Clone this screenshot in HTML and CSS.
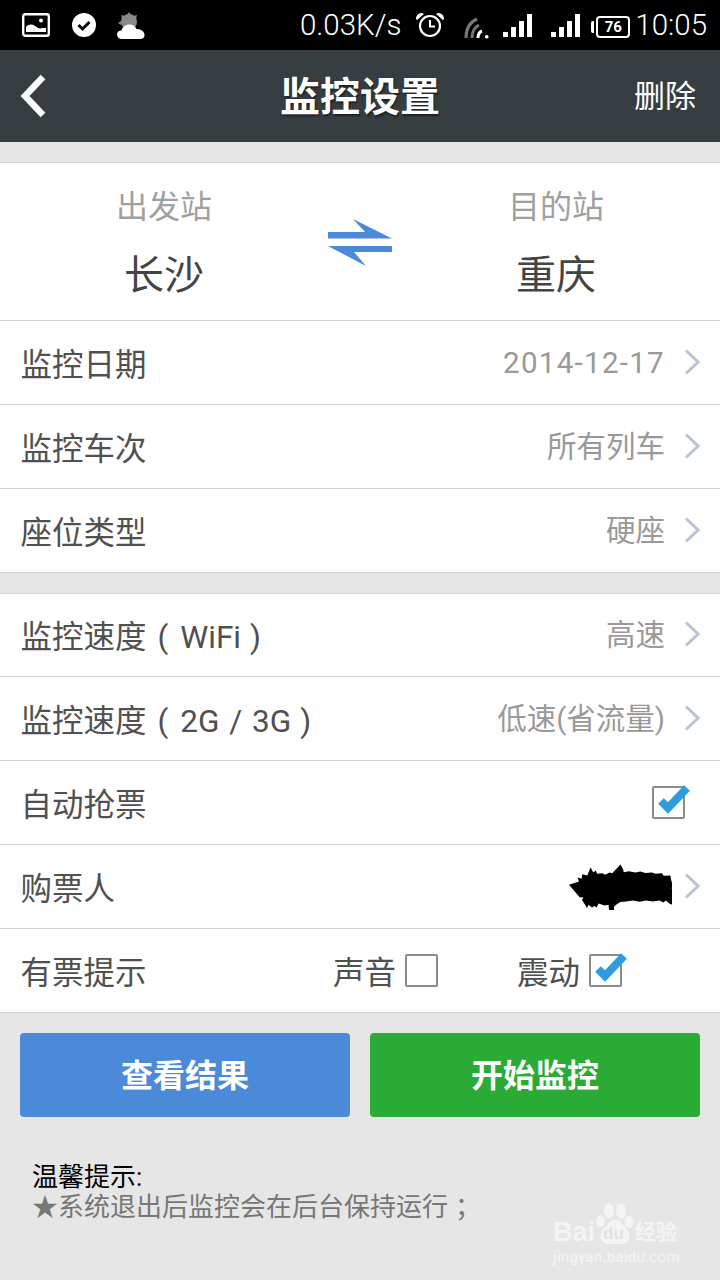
FILE: index.html
```html
<!DOCTYPE html>
<html lang="zh-CN">
<head>
    <meta charset="UTF-8">
    <meta name="viewport" content="width=device-width, initial-scale=1.0">
    <title>监控设置</title>
    <link rel="stylesheet" href="styles.css">
</head>
<body>
<div class="screen">

    <!-- Status bar -->
    <div class="status-bar">
        <div class="status-left">
            <svg class="ic-photo" width="28" height="24" viewBox="0 0 28 24">
                <rect x="1.2" y="1.2" width="25.6" height="21.6" rx="2" fill="none" stroke="#fff" stroke-width="2.4"/>
                <circle cx="19" cy="7.500" r="2" fill="#fff"/>
                <path d="M4 19v-5c3-3 6-3 9-1s5 3 7 2l4 0v4z" fill="#fff"/>
            </svg>
            <svg class="ic-check" width="24" height="24" viewBox="0 0 24 24">
                <circle cx="12" cy="12" r="12" fill="#fff"/>
                <path d="M6.500 12l4 4 7-7" fill="none" stroke="#000" stroke-width="3"/>
            </svg>
            <svg class="ic-weather" width="28" height="28" viewBox="0 0 28 28">
                <circle cx="12" cy="10" r="8" fill="#8a8a8a"/>
                <path d="M12 0l2 3h-4zM4 3l4 1-3 3zM20 3l-1 4-3-3zM1 11l3-2v4z" fill="#8a8a8a"/>
                <path d="M5 27c-3 0-5-2-5-4.500s2-4 4.500-4c1-3.500 4-6 8-6 3.500 0 6 1.800 7 4.500 4.500 0 8 2.500 8 6 0 3-2 4-5 4z" fill="#fff"/>
            </svg>
        </div>
        <div class="status-right">
            <span class="speed">0.03K/s</span>
            <svg class="ic-alarm" width="30" height="26" viewBox="0 0 30 26">
                <circle cx="15" cy="14" r="10" fill="none" stroke="#fff" stroke-width="2.2"/>
                <path d="M15 8v6.500h5" fill="none" stroke="#fff" stroke-width="2"/>
                <path d="M1 7c0-4 3-6 6-6l2 1-7 6zM29 7c0-4-3-6-6-6l-2 1 7 6z" fill="#fff"/>
            </svg>
            <svg class="ic-wifi" width="26" height="26" viewBox="0 0 26 26">
                <path d="M2 25c0-9 4-16 11-19" fill="none" stroke="#777" stroke-width="3"/>
                <path d="M8 25c0-6 3-11 7-13" fill="none" stroke="#777" stroke-width="3"/>
                <path d="M14 25c0-3 1.500-6 4-7" fill="none" stroke="#fff" stroke-width="3"/>
                <rect x="21" y="22" width="3.500" height="3.500" rx="1.500" fill="#fff"/>
            </svg>
            <svg class="ic-signal" width="30" height="24" viewBox="0 0 30 24">
                <path d="M0 18h5v5H0zM8 13h5v10H8zM16 7h5v16h-5zM24 0h5v23h-5z" fill="#fff"/>
            </svg>
            <svg class="ic-signal" width="30" height="24" viewBox="0 0 30 24">
                <path d="M0 18h5v5H0zM8 13h5v10H8zM16 7h5v16h-5zM24 0h5v23h-5z" fill="#fff"/>
            </svg>
            <div class="battery"><span>76</span></div>
            <span class="clock">10:05</span>
        </div>
    </div>

    <!-- Title bar -->
    <div class="title-bar">
        <svg class="back" width="30" height="44" viewBox="0 0 30 44">
            <path d="M25 3L7 22l18 19" fill="none" stroke="#fff" stroke-width="6.500"/>
        </svg>
        <h1>监控设置</h1>
        <span class="delete">删除</span>
    </div>

    <!-- Stations -->
    <div class="group first">
        <div class="stations">
            <div class="station">
                <span class="station-label">出发站</span>
                <span class="station-name">长沙</span>
            </div>
            <svg class="swap" width="64" height="48" viewBox="0 0 64 48">
                <path d="M0 13h37L25 0l39 19.500H0zM0 27h64v6H26l12 14z" fill="#4a8ad9"/>
            </svg>
            <div class="station">
                <span class="station-label">目的站</span>
                <span class="station-name">重庆</span>
            </div>
        </div>
        <div class="row">
            <span class="row-title">监控日期</span>
            <span class="row-value num">2014-12-17</span>
            <svg class="chev" width="16" height="26" viewBox="0 0 16 26"><path d="M2 1.500L14 13 2 24.500" fill="none" stroke="#b8c4d2" stroke-width="3"/></svg>
        </div>
        <div class="row">
            <span class="row-title">监控车次</span>
            <span class="row-value">所有列车</span>
            <svg class="chev" width="16" height="26" viewBox="0 0 16 26"><path d="M2 1.500L14 13 2 24.500" fill="none" stroke="#b8c4d2" stroke-width="3"/></svg>
        </div>
        <div class="row">
            <span class="row-title">座位类型</span>
            <span class="row-value">硬座</span>
            <svg class="chev" width="16" height="26" viewBox="0 0 16 26"><path d="M2 1.500L14 13 2 24.500" fill="none" stroke="#b8c4d2" stroke-width="3"/></svg>
        </div>
    </div>

    <div class="group second">
        <div class="row">
            <span class="row-title">监控速度<span class="paren-l">(</span><span class="latin">WiFi</span>)</span>
            <span class="row-value">高速</span>
            <svg class="chev" width="16" height="26" viewBox="0 0 16 26"><path d="M2 1.500L14 13 2 24.500" fill="none" stroke="#b8c4d2" stroke-width="3"/></svg>
        </div>
        <div class="row">
            <span class="row-title">监控速度<span class="paren-l">(</span><span class="latin">2G / 3G</span>)</span>
            <span class="row-value">低速(省流量)</span>
            <svg class="chev" width="16" height="26" viewBox="0 0 16 26"><path d="M2 1.500L14 13 2 24.500" fill="none" stroke="#b8c4d2" stroke-width="3"/></svg>
        </div>
        <div class="row">
            <span class="row-title">自动抢票</span>
            <div class="check-box on auto">
                <svg class="tick" width="36" height="34" viewBox="0 0 36 34"><path d="M5 20l7 7L31 7" fill="none" stroke="#2f9be0" stroke-width="8"/></svg>
            </div>
        </div>
        <div class="row">
            <span class="row-title">购票人</span>
            <svg class="scribble" width="103" height="47" viewBox="0 0 310 140">
                <path d="M0 65l30-10 -4-12 12 4 2-14 15 4 10-25 8 16 7-6 5 10 15-2 10 5 12-7 8 2 25-26 8 15 2 8 15-3 20 4 15-3 15 4 20-1 10 4 20-2 5 8 20-1 2 12 5 16-3 10 8 14 6 8-12 5 3 8-5 15-9-5-8-8-8 6-12-6-20 3-20-3-20 4-20-4-20 3-18 2-12 8-6 5-2 30-12-2-3-33-12 2-18-6-6 12-7-4-7 4-10-8-5 10-15-25 5-7-12-1z" fill="#000"/>
            </svg>
            <svg class="chev" width="16" height="26" viewBox="0 0 16 26"><path d="M2 1.500L14 13 2 24.500" fill="none" stroke="#b8c4d2" stroke-width="3"/></svg>
        </div>
        <div class="row">
            <span class="row-title">有票提示</span>
            <div class="notify">
                <span class="notify-label">声音</span>
                <div class="check-box"></div>
            </div>
            <div class="notify">
                <span class="notify-label">震动</span>
                <div class="check-box on">
                    <svg class="tick" width="36" height="34" viewBox="0 0 36 34"><path d="M5 20l7 7L31 7" fill="none" stroke="#2f9be0" stroke-width="8"/></svg>
                </div>
            </div>
        </div>
    </div>

    <!-- Actions -->
    <div class="actions">
        <button class="btn blue">查看结果</button>
        <button class="btn green">开始监控</button>
    </div>

    <div class="tips">
        <p class="tips-title">温馨提示:</p>
        <p class="tips-text">★系统退出后监控会在后台保持运行<span class="semi">；</span></p>
    </div>

    <!-- Watermark -->
    <div class="watermark">
        <div class="wm-top">
            <span class="wm-bai">Bai</span>
            <div class="wm-logo">
                <svg width="38" height="41" viewBox="0 0 38 41">
                    <ellipse cx="13" cy="8" rx="5" ry="7.500" fill="#f4f4f4"/>
                    <ellipse cx="25" cy="8" rx="5" ry="7.500" fill="#f4f4f4"/>
                    <ellipse cx="4.500" cy="18" rx="4.500" ry="6" fill="#f4f4f4"/>
                    <ellipse cx="33" cy="19" rx="4.500" ry="6" fill="#f4f4f4"/>
                    <path d="M19 17c6 0 7 4 11 8 5 5 5 15-4 16H12C3 40 3 30 8 25c4-3 5-8 11-8z" fill="#f4f4f4"/>
                </svg>
                <span class="wm-du">du</span>
            </div>
            <span class="wm-jy">经验</span>
        </div>
        <span class="wm-url">jingyan.baidu.com</span>
    </div>
</div>
</body>
</html>
```

FILE: styles.css
```css
* {
    box-sizing: border-box;
}

html, body {
    margin: 0;
    padding: 0;
}

body {
    font-family: "Roboto", "Noto Sans CJK SC", sans-serif;
    background-color: #e6e6e6;
}

.screen {
    position: relative;
    width: 720px;
    height: 1280px;
    overflow: hidden;
    background-color: #e6e6e6;
}

/* Status bar */
.status-bar {
    display: flex;
    justify-content: space-between;
    align-items: center;
    height: 50px;
    background-color: #000;
    color: #fff;
}

.status-left {
    display: flex;
    align-items: center;
    padding-left: 22px;
}

.ic-photo {
    margin-right: 22px;
}

.ic-check {
    margin-right: 22px;
}

.ic-weather {
    margin-top: 2px;
    margin-left: -1px;
}

.status-right {
    display: flex;
    align-items: center;
    padding-right: 13px;
}

.speed {
    font-size: 29.5px;
    font-weight: 300;
    margin-right: 14px;
}

.ic-alarm {
    margin-right: 19px;
}

.ic-wifi {
    margin-right: 13px;
    margin-top: 2px;
}

.ic-signal {
    margin-right: 18px;
    margin-top: 1px;
}

.ic-signal + .battery {
    margin-left: -3px;
}

.battery {
    display: flex;
    align-items: center;
    justify-content: center;
    width: 34px;
    height: 22px;
    margin-top: 3px;
    margin-right: 5px;
    border: 2.500px solid #fff;
    border-radius: 4px;
    font-size: 15px;
    font-weight: 700;
    position: relative;
}

.battery::before {
    content: "";
    position: absolute;
    left: -7px;
    top: 3px;
    width: 3px;
    height: 12px;
    background-color: #fff;
    border-radius: 2px 0 0 2px;
}

.clock {
    font-size: 29.5px;
    font-weight: 300;
}

/* Title bar */
.title-bar {
    position: relative;
    display: flex;
    align-items: center;
    justify-content: center;
    height: 92px;
    background-color: #373e42;
    color: #fff;
}

.title-bar h1 {
    margin: 4px 0 0;
    font-size: 40px;
    font-weight: 700;
    line-height: 88px;
    text-shadow: 1px 2px 2px rgba(0, 0, 0, 0.5);
}

.back {
    position: absolute;
    left: 18px;
    top: 24px;
}

.delete {
    position: absolute;
    right: 24px;
    top: 25px;
    font-size: 31px;
    line-height: 44px;
}

/* Groups and rows */
.group {
    background-color: #fff;
    border-top: 1px solid #d3d5d8;
    border-bottom: 1px solid #d3d5d8;
}

.group.first {
    margin-top: 20px;
}

.group.second {
    margin-top: 20px;
}

.group.second .row:first-child {
    height: 82px;
    border-top: none;
}

.stations {
    display: flex;
    align-items: center;
    height: 157px;
    padding-top: 2px;
}

.station {
    display: flex;
    flex-direction: column;
    align-items: center;
    flex: none;
    width: 328px;
}

.station-label {
    font-size: 32px;
    line-height: 40px;
    color: #a0a0a0;
    margin-bottom: 27px;
}

.station-name {
    font-size: 40px;
    line-height: 44px;
    color: #444;
}

.swap {
    flex: none;
}

.row {
    display: flex;
    align-items: center;
    height: 84px;
    padding: 0 20px 0 20.5px;
    border-top: 1px solid #d3d5d8;
}

.row-title {
    font-size: 31.5px;
    color: #505050;
    flex: 1;
    margin-bottom: 2px;
    white-space: nowrap;
}

.paren-l {
    margin-left: 11px;
    margin-right: 12px;
}

.latin {
    margin-right: 9px;
    word-spacing: 2px;
}

.row-value {
    font-size: 29.5px;
    color: #999;
    margin-bottom: 6px;
}

.row-value.num {
    margin-bottom: 0;
    letter-spacing: 1.3px;
}

.chev {
    margin-left: 19px;
    margin-bottom: 2px;
}

.check-box {
    position: relative;
    width: 33px;
    height: 33px;
    border: 2px solid #8c8c8c;
    border-radius: 2px;
    background-color: #fff;
}

.check-box.auto {
    margin-right: 15px;
}

.tick {
    position: absolute;
    left: 2px;
    top: -7px;
}

.scribble {
    margin-right: -7px;
}

.notify {
    display: flex;
    align-items: center;
}

.notify + .notify {
    margin-left: 79px;
    margin-right: 78px;
}

.notify-label {
    font-size: 31.5px;
    color: #505050;
    margin-right: 9px;
    margin-bottom: 2px;
}

/* Buttons */
.actions {
    display: flex;
    gap: 20px;
    padding: 20px 20px 0;
}

.btn {
    flex: 1;
    height: 84px;
    padding: 0 0 4px;
    border: none;
    border-radius: 4px;
    color: #fff;
    font-family: inherit;
    font-size: 32px;
    font-weight: 700;
}

.btn.blue {
    background-color: #4a8ad9;
}

.btn.green {
    background-color: #29ab35;
}

.tips {
    padding: 45px 0 0 32px;
}

.tips p {
    margin: 0;
    font-size: 26px;
    line-height: 30px;
}

.tips-title {
    color: #000;
}

.tips .tips-text {
    color: #777;
}

.semi {
    margin-left: 7px;
}

/* Watermark */
.watermark {
    position: absolute;
    left: 553px;
    top: 1203px;
    display: flex;
    flex-direction: column;
    color: #f4f4f4;
}

.wm-top {
    display: flex;
    align-items: flex-end;
    height: 41px;
}

.wm-bai {
    width: 43px;
    font-family: "Liberation Sans", sans-serif;
    font-size: 27px;
    font-weight: 700;
    line-height: 24px;
}

.wm-logo {
    position: relative;
    width: 38px;
    height: 41px;
}

.wm-du {
    position: absolute;
    left: 7px;
    bottom: 1px;
    font-family: "Liberation Sans", sans-serif;
    font-size: 17px;
    font-weight: 700;
    line-height: 18px;
    color: #e2e2e2;
}

.wm-jy {
    margin-left: 1px;
    font-size: 21px;
    font-weight: 700;
    line-height: 24px;
    white-space: nowrap;
}

.wm-url {
    margin-top: 3px;
    font-size: 15px;
    line-height: 20px;
    letter-spacing: 0.3px;
    white-space: nowrap;
}
```
